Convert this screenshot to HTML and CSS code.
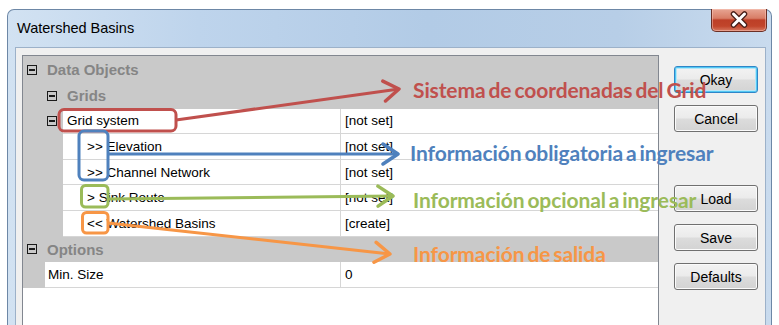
FILE: index.html
```html
<!DOCTYPE html>
<html lang="es">
<head>
<meta charset="UTF-8" />
<title>Watershed Basins</title>
<link rel="stylesheet" href="styles.css">
</head>
<body>
<div class="window">
  <div class="titlebar">
    <span class="title">Watershed Basins</span>
    <div class="close-btn">
      <svg width="56" height="23" viewBox="0 0 56 23">
        <path d="M22.5 15 L33.5 26 M33.5 15 L22.5 26" transform="translate(0,-9)" stroke="#4a2019" stroke-width="5.5" stroke-linecap="round"/>
        <path d="M22.5 15 L33.5 26 M33.5 15 L22.5 26" transform="translate(0,-9)" stroke="#fff" stroke-width="3" stroke-linecap="round"/>
      </svg>
    </div>
  </div>
  <div class="client">
    <div class="grid">
      <div class="row cat">
        <span class="box"></span><span>Data Objects</span>
      </div>
      <div class="row cat lvl1">
        <span class="box"></span><span>Grids</span>
      </div>
      <div class="row prop">
        <div class="gutter wide"><span class="box"></span></div>
        <div class="name">Grid system</div>
        <div class="value">[not set]</div>
      </div>
      <div class="row prop">
        <div class="gutter wide"></div>
        <div class="name sub">&gt;&gt; Elevation</div>
        <div class="value">[not set]</div>
      </div>
      <div class="row prop">
        <div class="gutter wide"></div>
        <div class="name sub">&gt;&gt; Channel Network</div>
        <div class="value">[not set]</div>
      </div>
      <div class="row prop">
        <div class="gutter wide"></div>
        <div class="name sub">&gt; Sink Route</div>
        <div class="value">[not set]</div>
      </div>
      <div class="row prop">
        <div class="gutter wide"></div>
        <div class="name sub">&lt;&lt; Watershed Basins</div>
        <div class="value">[create]</div>
      </div>
      <div class="row cat">
        <span class="box"></span><span>Options</span>
      </div>
      <div class="row prop">
        <div class="gutter"></div>
        <div class="name short">Min. Size</div>
        <div class="value">0</div>
      </div>
    </div>
    <div class="buttons">
      <button class="btn default">Okay</button>
      <button class="btn">Cancel</button>
      <button class="btn gap">Load</button>
      <button class="btn">Save</button>
      <button class="btn">Defaults</button>
    </div>
  </div>
</div>

<!-- anotaciones sobre la captura -->
<svg class="annot" width="779" height="325" viewBox="0 0 779 325">
  <defs>
    <marker id="arRed" markerUnits="userSpaceOnUse" markerWidth="24" markerHeight="24" refX="18" refY="12" orient="auto">
      <path d="M3,2 L18,12 L3,22" fill="none" stroke="#c0504d" stroke-width="3.5" stroke-linecap="round" stroke-linejoin="round"/>
    </marker>
    <marker id="arBlue" markerUnits="userSpaceOnUse" markerWidth="24" markerHeight="24" refX="18" refY="12" orient="auto">
      <path d="M3,2 L18,12 L3,22" fill="none" stroke="#4f81bd" stroke-width="3.5" stroke-linecap="round" stroke-linejoin="round"/>
    </marker>
    <marker id="arGreen" markerUnits="userSpaceOnUse" markerWidth="24" markerHeight="24" refX="18" refY="12" orient="auto">
      <path d="M3,2 L18,12 L3,22" fill="none" stroke="#9bbb59" stroke-width="3.5" stroke-linecap="round" stroke-linejoin="round"/>
    </marker>
    <marker id="arOrange" markerUnits="userSpaceOnUse" markerWidth="24" markerHeight="24" refX="18" refY="12" orient="auto">
      <path d="M3,2 L18,12 L3,22" fill="none" stroke="#f79646" stroke-width="3.5" stroke-linecap="round" stroke-linejoin="round"/>
    </marker>
  </defs>
  <rect x="59" y="109.5" width="117" height="21.5" rx="5" fill="none" stroke="#c0504d" stroke-width="3"/>
  <line x1="176" y1="120" x2="399" y2="89" stroke="#c0504d" stroke-width="3" marker-end="url(#arRed)"/>

  <rect x="79" y="131" width="29" height="49" rx="5" fill="none" stroke="#4f81bd" stroke-width="3"/>
  <line x1="108" y1="154" x2="398" y2="154" stroke="#4f81bd" stroke-width="3" marker-end="url(#arBlue)"/>

  <rect x="81.5" y="185.5" width="26.5" height="21.5" rx="4" fill="none" stroke="#9bbb59" stroke-width="3"/>
  <line x1="108" y1="199" x2="393" y2="196" stroke="#9bbb59" stroke-width="3" marker-end="url(#arGreen)"/>

  <rect x="82.5" y="212.5" width="25.5" height="20.5" rx="4" fill="none" stroke="#f79646" stroke-width="3"/>
  <line x1="108" y1="223" x2="390" y2="254" stroke="#f79646" stroke-width="3" marker-end="url(#arOrange)"/>
</svg>

<div class="label red">Sistema de coordenadas del Grid</div>
<div class="label blue">Información obligatoria a ingresar</div>
<div class="label green">Información opcional a ingresar</div>
<div class="label orange">Información de salida</div>
</body>
</html>
```

FILE: styles.css
```css
* {
  box-sizing: border-box;
}
html, body {
  margin: 0;
  padding: 0;
}
body {
  width: 779px;
  height: 325px;
  overflow: hidden;
  position: relative;
  background: #fff;
  font-family: "Liberation Sans", Arial, sans-serif;
  color: #000;
}

/* Ventana */
.window {
  margin: 9px 0 0 7px;
  width: 765px;
  height: 330px;
  border: 1px solid #6d87a6;
  border-bottom: none;
  border-radius: 7px 7px 0 0;
  padding: 0 5px 0 7px;
  background: linear-gradient(90deg, #d2e2f2 0%, #bed4ec 25%, #b2cbe6 55%, #b7cee7 80%, #c9dbee 100%);
  display: flex;
  flex-direction: column;
}
.titlebar {
  height: 37px;
  display: flex;
  justify-content: space-between;
  align-items: flex-start;
}
.title {
  margin: 10px 0 0 2px;
  font-size: 14.5px;
  color: #000;
}
.close-btn {
  width: 56px;
  height: 23px;
  margin: -1px -1px 0 0;
  border: 1px solid #6b2f25;
  border-top: none;
  border-radius: 0 0 5px 5px;
  background: linear-gradient(#e7a593 0%, #d87d66 42%, #bd3f27 50%, #c1452b 78%, #d6785f 100%);
  box-shadow: inset 0 0 0 1px rgba(255, 210, 200, 0.45);
  overflow: hidden;
}
.close-btn svg {
  display: block;
  margin: -1px 0 0 -1px;
}

/* Area cliente */
.client {
  flex: 1;
  background: #f0f0f0;
  border: 1px solid #9cb1c9;
  border-bottom: none;
  padding: 7px 0 0 6px;
  display: flex;
}

/* Grilla de propiedades */
.grid {
  width: 637px;
  border: 1px solid #828790;
  border-bottom: none;
  background: #fff;
  font-size: 13.5px;
}
.row {
  display: flex;
  align-items: center;
  height: 25.6px;
}
.row.cat {
  background: #c9c9c9;
  color: #858585;
  font-weight: 700;
  font-size: 15px;
  padding-left: 4px;
}
.row.cat:first-child {
  height: 27px;
}
.row.cat.lvl1 {
  padding-left: 24px;
}
.box {
  display: inline-block;
  width: 10px;
  height: 10px;
  border: 1px solid #1a1a1a;
  background: linear-gradient(#1a1a1a, #1a1a1a) center / 6px 2px no-repeat;
  margin-right: 10px;
  flex: none;
}
.row.prop {
  align-items: stretch;
}
.gutter {
  width: 22px;
  background: #c9c9c9;
  flex: none;
  display: flex;
  align-items: center;
}
.gutter.wide {
  width: 40px;
  padding-left: 24px;
}
.name {
  flex: 1;
  display: flex;
  align-items: center;
  padding-left: 4px;
  border-bottom: 1px solid #d6d6d6;
  white-space: pre;
}
.name.sub {
  padding-left: 24px;
}
.name.short {
  padding-left: 3px;
}
.value {
  width: 318px;
  flex: none;
  display: flex;
  align-items: center;
  padding-left: 4px;
  border-left: 1px solid #d6d6d6;
  border-bottom: 1px solid #d6d6d6;
}

/* Botones */
.buttons {
  margin-left: 15px;
  display: flex;
  flex-direction: column;
  gap: 12px;
  padding-top: 11px;
}
.btn {
  width: 84px;
  height: 27px;
  border: 1px solid #707070;
  border-radius: 3px;
  background: linear-gradient(#f3f3f3 0%, #ebebeb 48%, #dcdcdc 52%, #d3d3d3 100%);
  box-shadow: inset 0 0 0 1px #fbfbfb;
  font-family: "Liberation Sans", Arial, sans-serif;
  font-size: 14px;
  color: #000;
  padding: 0;
}
.btn.default {
  border-color: #2f86c8;
  box-shadow: inset 0 0 0 1px #52c8f3, inset 0 0 0 2px #b6e6f8;
}
.btn.gap {
  margin-top: 41px;
}

/* Anotaciones */
.annot {
  position: absolute;
  left: 0;
  top: 0;
  pointer-events: none;
}
.label {
  position: absolute;
  font-family: Lato, "Open Sans", sans-serif;
  font-weight: 700;
  font-size: 21px;
  line-height: 24px;
  white-space: nowrap;
  letter-spacing: -0.1px;
  word-spacing: -2px;
}
.label.red {
  left: 413px;
  top: 78px;
  color: #c0504d;
}
.label.blue {
  left: 410px;
  top: 141px;
  color: #4f81bd;
}
.label.green {
  left: 413px;
  top: 188px;
  color: #9bbb59;
}
.label.orange {
  left: 413px;
  top: 242px;
  color: #f79646;
}
```
